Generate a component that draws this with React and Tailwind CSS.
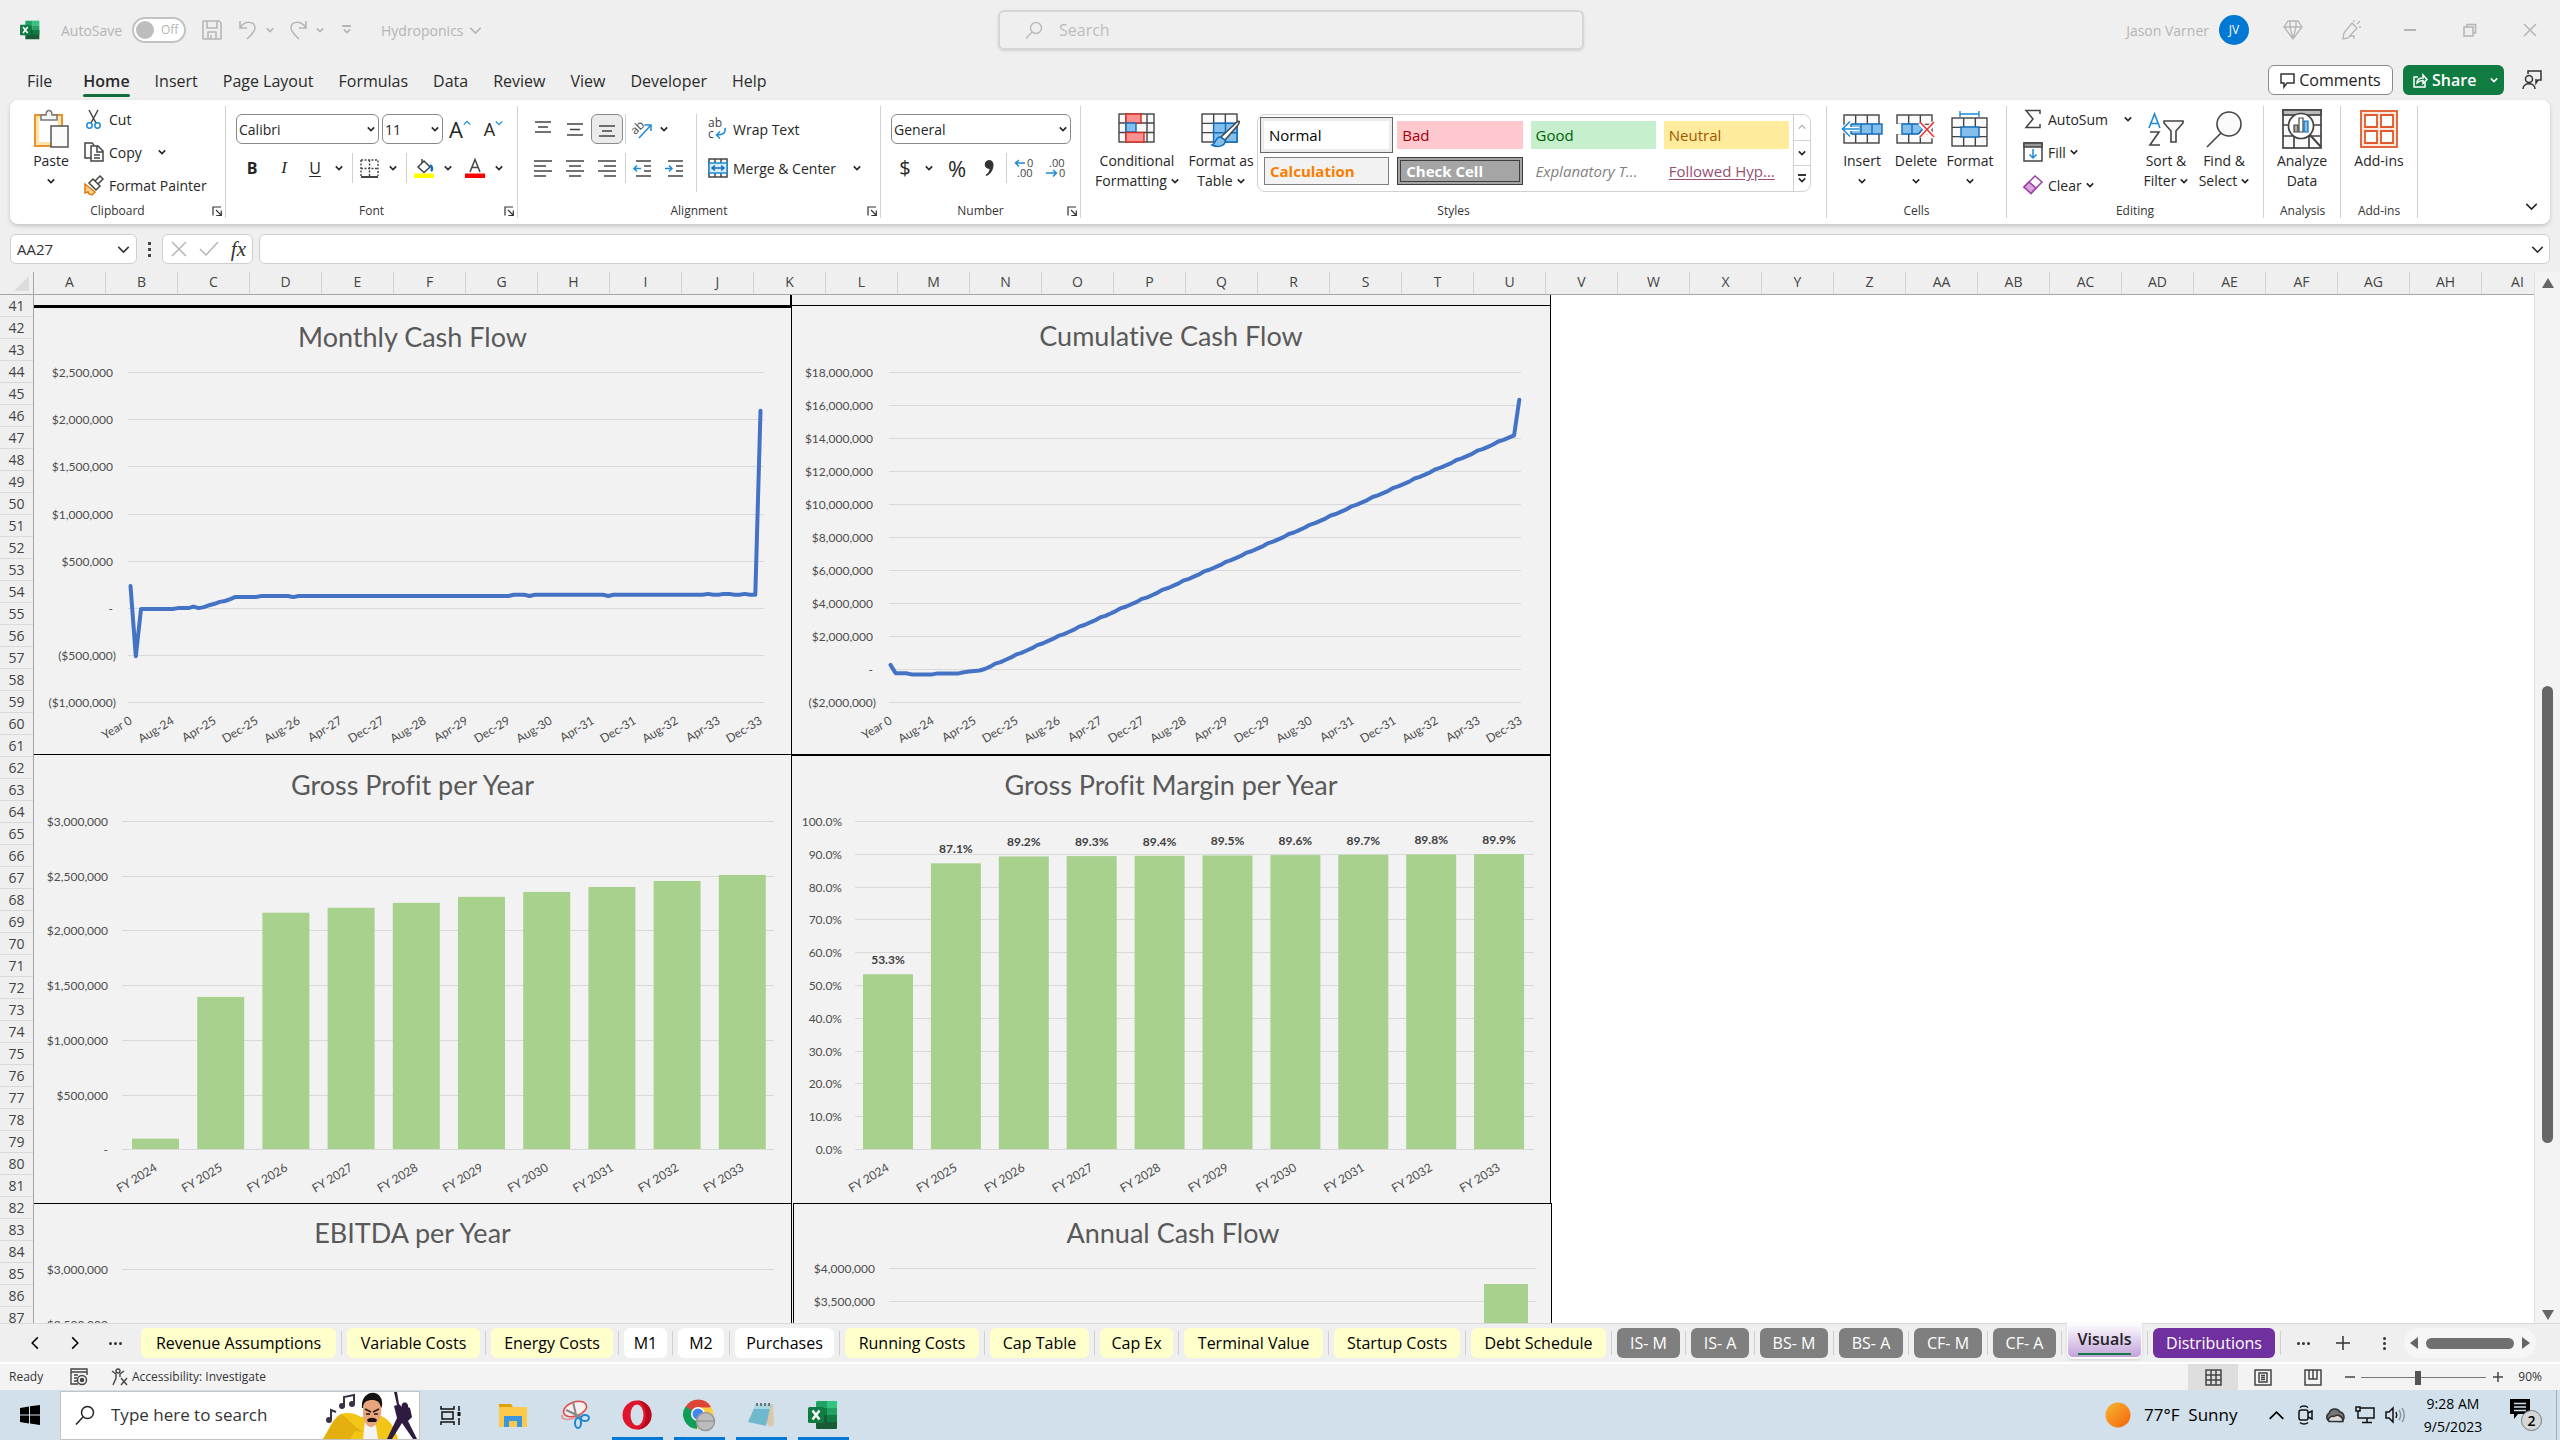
import React from "react";
import clsx from "clsx";

/* ---------- small shared pieces ---------- */

const Chev = ({ w = 8, className = "", sw = 2 }) => (
  <svg width={w} height={w} viewBox="0 0 10 10" fill="none" stroke="currentColor" strokeWidth={sw} className={clsx("shrink-0", className)}>
    <path d="M1 3l4 4 4-4" />
  </svg>
);

const Sep = ({ slot = "w-1", h = "h-[30px]" }) => (
  <div className={clsx("flex shrink-0 justify-center", slot)}>
    <div className={clsx("w-px bg-[#d1d1d1]", h)} />
  </div>
);

const Slot = ({ w, label, children, className = "" }) => (
  <button aria-label={label} className={clsx("flex h-[30px] shrink-0 items-center justify-center", w, className)}>
    {children}
  </button>
);

const Svg = ({ w = 20, h, box, children, ...rest }) => (
  <svg width={w} height={h || w} viewBox={box || `0 0 ${w} ${h || w}`} fill="none" stroke="#444" strokeWidth="1.5" className="shrink-0 overflow-visible" {...rest}>
    {children}
  </svg>
);

const Launcher = () => (
  <button aria-label="More options" className="flex items-center justify-center">
    <Svg w={10} stroke="#333" strokeWidth="1.2">
      <path d="M1 9.500V1h8M4 4l5 5M9.300 4.500v5h-5" />
    </Svg>
  </button>
);

function Group({ name, w, launcher, children, bodyClass = "" }) {
  return (
    <section aria-label={name} className={clsx("flex h-full shrink-0 pt-[3px]", w)}>
      <div className="flex min-w-0 flex-1 flex-col">
        <div className={clsx("flex h-[99px] shrink-0", bodyClass)}>{children}</div>
        <div className="grid h-[18px] shrink-0 grid-cols-[16px_1fr_16px] items-center text-center text-[12px] text-[#333]">
          <span />
          <span>{name}</span>
          {launcher ? <Launcher /> : <span />}
        </div>
      </div>
      <div className="mt-[3px] mb-[6px] w-px bg-[#d1d1d1]" />
    </section>
  );
}

const BigButton = ({ icon, lines, chevron, w, inline }) => (
  <button className={clsx("flex shrink-0 flex-col items-center pt-1", w)}>
    <span className="flex h-[44px] items-center justify-center">{icon}</span>
    {lines.map((l, i) => (
      <span key={l} className="flex h-5 items-center gap-1 whitespace-nowrap text-[14px] leading-5">
        {l}
        {inline && i === lines.length - 1 && <Chev />}
      </span>
    ))}
    {chevron && <span className="flex h-5 items-center"><Chev /></span>}
  </button>
);

/* ---------- icons ---------- */

const ExcelLogo = ({ size = 20 }) => (
  <svg width={size} height={size} viewBox="0 0 30 30" className="shrink-0">
    <path d="M9 1h10v7H8V2z" fill="#21a366" />
    <path d="M19 1h10v7H19z" fill="#33c481" />
    <path d="M8 8h11v7H8z" fill="#107c41" />
    <path d="M19 8h10v7H19z" fill="#21a366" />
    <path d="M8 15h21v13a1 1 0 01-1 1H9a1 1 0 01-1-1z" fill="#185c37" />
    <path d="M19 15h10v7H19z" fill="#107c41" />
    <rect x="0" y="7" width="16" height="16" rx="1.500" fill="#107c41" />
    <path d="M4.500 10.500l7 9M11.500 10.500l-7 9" stroke="#fff" strokeWidth="2.400" />
  </svg>
);

const PasteIcon = () => (
  <Svg w={36} h={38}>
    <rect x="2" y="5" width="27" height="31" fill="#fde3a7" stroke="#e8912d" strokeWidth="2" />
    <rect x="6" y="9" width="19" height="23" fill="#fff" stroke="none" />
    <path d="M8 10V5h5c0-6 6-6 6 0h5v5z" fill="#f5f5f5" stroke="#777" />
    <rect x="18" y="16" width="17" height="21" fill="#fafafa" stroke="#555" />
  </Svg>
);

const CutIcon = () => (
  <Svg w={20}>
    <path d="M5 1l7 13M14 1L7 14" />
    <circle cx="5.500" cy="16.500" r="2.700" stroke="#1e8ad6" />
    <circle cx="13.500" cy="16.500" r="2.700" stroke="#1e8ad6" />
  </Svg>
);

const CopyIcon = () => (
  <Svg w={20}>
    <path d="M8 16H1V1h7l2 2" />
    <path d="M7 4h7l5 5v10H7zM13 4v6h6M10 13h6M10 16h6" fill="#fff" />
  </Svg>
);

const PainterIcon = () => (
  <Svg w={20}>
    <path d="M1 9l10 8-3 3-3-1-1-2-3 1z" fill="#fbd28b" stroke="#e07a10" />
    <path d="M5 8l4-4 7 7-4 4zM11 6l5-5 3 3-5 5" fill="#fff" />
  </Svg>
);

const Grid = ({ x, y, w, h }) => (
  <g>
    <rect x={x} y={y} width={w} height={h} fill="#fafafa" />
    <path d={`M${x + w / 3} ${y}v${h}M${x + (2 * w) / 3} ${y}v${h}M${x} ${y + h / 3}h${w}M${x} ${y + (2 * h) / 3}h${w}`} />
  </g>
);

const CondIcon = () => (
  <Svg w={38} h={32} strokeWidth="1.400">
    <rect x="1" y="1" width="35" height="28" fill="#fafafa" />
    <path d="M8 1v28M29 1v28M1 10h35M1 19.500h35" />
    <rect x="8" y="1" width="15" height="9" fill="#ff9191" stroke="#d92c20" />
    <rect x="8" y="10" width="10" height="9" fill="#83beec" stroke="#0f6cbd" />
    <rect x="8" y="19.500" width="18" height="9.500" fill="#ff9191" stroke="#d92c20" />
  </Svg>
);

const TableIcon = () => (
  <Svg w={40} h={32} strokeWidth="1.400">
    <Grid x={1} y={1} w={35} h={28} />
    <path d="M12.600 10.300H36V29H12.600z" fill="#83beec" stroke="#0f6cbd" />
    <path d="M24.500 10v19M12.600 19.700H36" stroke="#0f6cbd" />
    <path d="M36 9c3-2 3 0 1 3L24 27l-4-3z" fill="#fff" stroke="#444" />
    <path d="M19 24c-5 0-3 6-8 8 6 3 14 1 13-5z" fill="#83beec" stroke="#0f6cbd" />
  </Svg>
);

const InsertIcon = () => (
  <Svg w={42} h={30} strokeWidth="1.400">
    <Grid x={3} y={1} w={35} h={28} />
    <rect x="10" y="10" width="31" height="10" fill="#83beec" stroke="#0f6cbd" />
    <path d="M20 10v10M31 10v10" stroke="#0f6cbd" />
    <path d="M2 15h16M10 7l-8.500 8 8.500 8" stroke="#fff" strokeWidth="4" />
    <path d="M1.500 15H18M9 7.500L1.500 15 9 22.500" stroke="#1e8ad6" strokeWidth="1.600" />
  </Svg>
);

const DeleteIcon = () => (
  <Svg w={40} h={30} strokeWidth="1.400">
    <Grid x={1} y={1} w={35} h={28} />
    <path d="M0 10h6v10H0z" fill="#fff" stroke="none" />
    <path d="M6 10h16l5 5-5 5H6zM16 10v10" fill="#83beec" stroke="#0f6cbd" />
    <path d="M24 9l14 14M38 9L24 23" stroke="#fff" strokeWidth="5" />
    <path d="M24 8l14 15M38 8L24 23" stroke="#e8383d" strokeWidth="1.700" />
  </Svg>
);

const FormatIcon = () => (
  <Svg w={38} h={36} strokeWidth="1.400">
    <Grid x={1} y={7} w={35} h={28} />
    <rect x="10" y="16" width="18" height="10" fill="#83beec" stroke="#0f6cbd" />
    <path d="M9 3h19M9 0v6M28 0v6" stroke="#1e8ad6" />
  </Svg>
);

const SortIcon = () => (
  <Svg w={38} h={36} strokeWidth="1.600">
    <path d="M2 17L7.500 3 13 17M4 12.500h7" stroke="#1e8ad6" />
    <path d="M3 21h9L3 34h10" />
    <path d="M17 10h19v2l-7 8v11h-5V20l-7-8z" fill="#fafafa" />
  </Svg>
);

const FindIcon = () => (
  <Svg w={38} h={38} strokeWidth="1.600">
    <circle cx="24" cy="14" r="12" fill="#fafafa" />
    <path d="M16 23L2 37" />
  </Svg>
);

const AnalyzeIcon = () => (
  <Svg w={40} h={40} strokeWidth="1.700">
    <rect x="1" y="1" width="38" height="38" fill="#fafafa" />
    <rect x="1" y="1" width="38" height="5" fill="#bbb" />
    <path d="M1 16h38M1 27h38M12 6v33M27 27v12" />
    <circle cx="19" cy="17" r="12.500" fill="#fff" />
    <path d="M28 26l11 12" strokeWidth="2" />
    <path d="M12 16h4v7h-4z" fill="#aaa" strokeWidth="1.200" />
    <path d="M17 9h4v14h-4z" fill="#fff" strokeWidth="1.200" />
    <path d="M22 12h4v11h-4z" fill="#83beec" stroke="#0f6cbd" strokeWidth="1.200" />
  </Svg>
);

const AddInsIcon = () => (
  <Svg w={38} h={38} stroke="#e0592a" strokeWidth="1.800">
    <rect x="1" y="1" width="36" height="36" fill="#fde9e0" />
    <path d="M5 5h12v12H5zM21 5h12v12H21zM5 21h12v12H5zM21 21h12v12H21z" fill="#fff" />
  </Svg>
);

const AlignIcon = ({ lines }) => (
  <Svg w={18} h={18} stroke="#444" strokeWidth="1.500">
    <path d={lines} />
  </Svg>
);

/* ---------- title bar, tabs ---------- */

function TitleBar() {
  return (
    <header className="grid h-[60px] shrink-0 grid-cols-[998fr_586fr_976fr] items-center text-[#b5b5b5]">
      <div className="flex items-center pl-5 text-[14px]">
        <ExcelLogo size={20} />
        <label htmlFor="autosave" className="ml-[21px] w-[63px]">AutoSave</label>
        <span className="ml-2 flex h-[26px] w-[54px] items-center gap-[7px] rounded-full border-2 border-[#c2c2c2] bg-white pl-[2px]">
          <input id="autosave" type="checkbox" className="size-[18px] appearance-none rounded-full bg-[#bdbdbd]" />
          <span className="text-[12px]">Off</span>
        </span>
        <button aria-label="Save" className="ml-4">
          <Svg w={20} stroke="#b5b5b5"><path d="M1 1h16l2 2v16H1zM5 1v7h10V1M6 19v-7h8v7M9 15v4" /></Svg>
        </button>
        <button aria-label="Undo" className="ml-4">
          <Svg w={20} stroke="#b5b5b5"><path d="M2 1v7h7M2 8C7 0 17 1 17 8c0 4-4 7-8 11" /></Svg>
        </button>
        <Chev className="ml-2" w={8} />
        <button aria-label="Redo" className="ml-[14px]">
          <Svg w={20} stroke="#b5b5b5"><path d="M18 1v7h-7M18 8C13 0 3 1 3 8c0 4 4 7 8 11" /></Svg>
        </button>
        <Chev className="ml-2" w={8} />
        <button aria-label="Customize toolbar" className="ml-[18px] flex flex-col items-center">
          <span className="h-[2px] w-[9px] bg-[#b5b5b5]" />
          <Chev w={8} />
        </button>
        <button className="ml-[30px] flex items-center gap-[5px]">Hydroponics <Chev w={13} sw={1.2} /></button>
      </div>
      <label className="flex h-[40px] items-center rounded-md border-2 border-[#d6d6d6] pl-[25px] text-[#bdbdbd] shadow-sm">
        <Svg w={18} stroke="#bdbdbd"><circle cx="11" cy="7" r="5.500" /><path d="M7 11l-6 6.500" /></Svg>
        <input aria-label="Search" placeholder="Search" className="ml-4 flex-1 bg-transparent text-[16px] outline-none placeholder:text-[#bdbdbd]" />
      </label>
      <div className="flex items-center justify-end text-[14px]">
        <span>Jason Varner</span>
        <span className="ml-[10px] flex size-[30px] items-center justify-center rounded-full bg-[#0078d4] text-[12px] text-white">JV</span>
        <button aria-label="Premium" className="ml-[15px] flex w-[58px] justify-center">
          <Svg w={20} stroke="#b5b5b5" strokeWidth="1.300"><path d="M5 1h10l4 6-9 12L1 7zM1 7h18M7 1v6l3 12 3-12V1" /></Svg>
        </button>
        <button aria-label="What's new" className="flex w-[58px] justify-center">
          <Svg w={20} stroke="#b5b5b5" strokeWidth="1.300"><path d="M11 3l5 5-9 10-5 1 1-6zM9 16h4v3M13 2V0M16 4l3-3M18 7h2" /></Svg>
        </button>
        <button aria-label="Minimize" className="flex w-[60px] justify-center"><span className="h-[2px] w-3 bg-[#b5b5b5]" /></button>
        <button aria-label="Restore" className="flex w-[60px] justify-center">
          <Svg w={14} stroke="#b5b5b5"><path d="M1 4h9v9H1zM4 4V1.500h8.500V10H10" /></Svg>
        </button>
        <button aria-label="Close" className="flex w-[60px] justify-center">
          <Svg w={14} stroke="#b5b5b5"><path d="M1 1l12 12M13 1L1 13" /></Svg>
        </button>
      </div>
    </header>
  );
}

const MENU = ["File", "Home", "Insert", "Page Layout", "Formulas", "Data", "Review", "View", "Developer", "Help"];

function MenuBar() {
  return (
    <nav className="flex h-10 shrink-0 items-start justify-between pl-[27px] pr-[18px]">
      <div className="flex gap-[25px] text-[16px] text-[#2b2b2b]">
        {MENU.map((m) => (
          <button key={m} className={clsx("flex h-[37px] flex-col items-stretch justify-between pt-2 leading-[26px]", m === "File" && "mr-[6px]", m === "Home" && "font-semibold")}>
            {m}
            {m === "Home" && <span className="h-[3px] rounded-full bg-[#0f703b]" />}
          </button>
        ))}
      </div>
      <div className="flex items-center pt-[5px] text-[16px]">
        <button className="flex h-[30px] w-[125px] items-center justify-center gap-1 rounded-md border border-[#8a8a8a] bg-white text-[#222]">
          <Svg w={15} stroke="#333"><path d="M1 1h13v9H7l-3 4v-4H1z" /></Svg>
          Comments
        </button>
        <button className="ml-[10px] flex h-[30px] w-[101px] items-center rounded-md bg-[#107c41] pl-[10px] text-white">
          <Svg w={15} stroke="#fff"><path d="M5 4H1v10h11V9M4 10c0-4 3-5 6-5V2l4 4.500-4 4V7.500C8 7.500 6 8 4 10z" /></Svg>
          <span className="ml-1 font-semibold">Share</span>
          <Chev className="ml-auto mr-[6px]" w={8} />
        </button>
        <button aria-label="Presence" className="ml-[18px]">
          <Svg w={20} stroke="#333"><path d="M6 4V1h13v9h-3l-2 3V9" /><circle cx="7" cy="9" r="3.500" /><path d="M1 19c0-7 12-7 12 0" /></Svg>
        </button>
      </div>
    </nav>
  );
}

/* ---------- ribbon ---------- */

const ComboBox = ({ label, value, w }) => (
  <label className={clsx("flex h-[30px] items-center rounded-md border border-[#8a8a8a] bg-white pr-[3px]", w)}>
    <select aria-label={label} className="min-w-0 flex-1 appearance-none bg-transparent pl-[2px] text-[14px] outline-none">
      <option>{value}</option>
    </select>
    <Chev w={8} />
  </label>
);

const STYLE_CELLS = [
  ["Normal", "bg-white text-black outline outline-[3px] outline-[#ececec] ring-[4px] ring-[#666]"],
  ["Bad", "bg-[#ffc7ce] text-[#9c0006]"],
  ["Good", "bg-[#c6efce] text-[#006100]"],
  ["Neutral", "bg-[#ffeb9c] text-[#9c5700]"],
  ["Calculation", "border border-[#7f7f7f] bg-[#f2f2f2] font-bold text-[#fa7d00]"],
  ["Check Cell", "border-4 border-double border-[#3f3f3f] bg-[#a5a5a5] font-bold text-white"],
  ["Explanatory T...", "italic text-[#7f7f7f]"],
  ["Followed Hyp...", "text-[#954f72] underline underline-offset-2"],
];

const CommandRow = ({ icon, text, chev, chevGap = "ml-1" }) => (
  <button className="flex h-8 items-center text-left text-[14px]">
    <span className="flex w-5 justify-center">{icon}</span>
    <span className="ml-[5px]">{text}</span>
    {chev && <Chev className={chevGap} />}
  </button>
);

function Ribbon() {
  return (
    <div className="mx-[10px] flex h-[124px] shrink-0 rounded-lg bg-white text-[#262626] shadow-[0_2px_4px_rgba(0,0,0,0.18)]">
      <Group name="Clipboard" w="w-[216px]" launcher bodyClass="pl-4">
        <BigButton w="w-[50px]" icon={<PasteIcon />} lines={["Paste"]} chevron />
        <div className="ml-2 flex flex-col gap-px">
          <CommandRow icon={<CutIcon />} text="Cut" />
          <CommandRow icon={<CopyIcon />} text="Copy" chev chevGap="ml-4" />
          <CommandRow icon={<PainterIcon />} text="Format Painter" />
        </div>
      </Group>

      <Group name="Font" w="w-[292px]" launcher bodyClass="flex-col gap-[9px] pt-[11px] pl-[10px]">
        <div className="flex">
          <ComboBox label="Font" value="Calibri" w="w-[143px] mr-[3px]" />
          <ComboBox label="Font size" value="11" w="w-[61px]" />
          <Slot w="w-[34px]" label="Increase font size" className="text-[22px]">A<Chev w={8} sw={1.6} className="mb-3 rotate-180 text-[#1e8ad6]" /></Slot>
          <Slot w="w-[33px]" label="Decrease font size" className="text-[18px]">A<Chev w={8} sw={1.6} className="mb-3 text-[#1e8ad6]" /></Slot>
        </div>
        <div className="flex items-center">
          <Slot w="w-8" label="Bold" className="text-[16px] font-bold">B</Slot>
          <Slot w="w-8" label="Italic" className="font-['Liberation_Serif',serif] text-[17px] italic">I</Slot>
          <Slot w="w-[30px]" label="Underline" className="text-[16px] underline underline-offset-2">U</Slot>
          <Slot w="w-[18px]" label="Underline options"><Chev /></Slot>
          <Sep slot="w-2" />
          <Slot w="w-[27px]" label="Borders"><Svg w={19} strokeWidth="1.400"><path d="M1 18h17" strokeWidth="2" /><path d="M1 1h17v16M1 1v16M9.500 1v16M1 9.500h17" strokeDasharray="2 1.500" /></Svg></Slot>
          <Slot w="w-5" label="Border options"><Chev /></Slot>
          <Sep slot="w-[6px]" />
          <Slot w="w-[30px]" label="Fill color"><Svg w={20}><path d="M4 9l6-6 6 6-6 5.500zM8 5V1" /><path d="M16 7c3 2 2 5 1 6" stroke="#0f6cbd" strokeWidth="2.500" /><path d="M0 15.500h20v4.500H0z" fill="#ffff00" stroke="none" /></Svg></Slot>
          <Slot w="w-[18px]" label="Fill options"><Chev /></Slot>
          <Slot w="w-9" label="Font color" className="flex-col"><Svg w={20}><path d="M5 14L10 1.500 15 14M6.800 9.500h6.400" /><path d="M0 15.500h20v4.500H0z" fill="#ff0000" stroke="none" /></Svg></Slot>
          <Slot w="w-3" label="Font color options"><Chev /></Slot>
        </div>
      </Group>

      <Group name="Alignment" w="w-[363px]" launcher bodyClass="pt-[11px] pl-[9px]">
        <div className="flex w-[163px] flex-col gap-[9px]">
          <div className="flex items-center">
            <Slot w="w-8" label="Top align"><AlignIcon lines="M1 2h16M4 7h10M1 12h16" /></Slot>
            <Slot w="w-8" label="Middle align"><AlignIcon lines="M1 4h16M4 9.500h10M1 15h16" /></Slot>
            <Slot w="w-8" label="Bottom align" className="rounded-md border border-[#8a8a8a] bg-[#ebebeb]"><AlignIcon lines="M1 6h16M4 11h10M1 16h16" /></Slot>
            <Sep slot="w-1" />
            <Slot w="w-[30px]" label="Orientation"><Svg w={22}><text x="0" y="15" fontSize="12" fill="#444" stroke="none" transform="rotate(-45 5 11)">ab</text><path d="M8 20L20 7M13.500 7H20v6" stroke="#1e8ad6" /></Svg></Slot>
            <Slot w="w-[14px]" label="Orientation options"><Chev /></Slot>
          </div>
          <div className="flex items-center">
            <Slot w="w-8" label="Align left"><AlignIcon lines="M0 2h18M0 7h12M0 12h18M0 17h12" /></Slot>
            <Slot w="w-8" label="Center"><AlignIcon lines="M0 2h18M3 7h12M0 12h18M3 17h12" /></Slot>
            <Slot w="w-8" label="Align right"><AlignIcon lines="M0 2h18M6 7h12M0 12h18M6 17h12" /></Slot>
            <Sep slot="w-1" />
            <Slot w="w-[30px]" label="Decrease indent"><Svg w={18}><path d="M3 2h15M11 7h7M11 12h7M3 17h15" /><path d="M8 9.500H1M4 6.500l-3 3 3 3" stroke="#1e8ad6" /></Svg></Slot>
            <Slot w="w-[33px]" label="Increase indent"><Svg w={18}><path d="M3 2h15M11 7h7M11 12h7M3 17h15" /><path d="M0 9.500h7M4 6.500l3 3-3 3" stroke="#1e8ad6" /></Svg></Slot>
          </div>
        </div>
        <Sep slot="w-3" h="h-[78px]" />
        <div className="ml-[6px] flex flex-col gap-[9px] text-[14px]">
          <button className="flex h-[30px] items-center gap-[5px]">
            <Svg w={20}><text x="0" y="8" fontSize="12" fill="#444" stroke="none">ab</text><text x="0" y="19" fontSize="12" fill="#444" stroke="none">c</text><path d="M17 9c1 5-2 7-8 7M12 12.500L8.500 16l3.500 3.500" stroke="#1e8ad6" /></Svg>
            Wrap Text
          </button>
          <button className="flex h-[30px] items-center gap-[5px]">
            <Svg w={20}><path d="M1 1h18v18H1zM7 1v4M13 1v4M7 15v4M13 15v4" /><path d="M1 5h18v10H1z" fill="#d9ecfa" stroke="#1e8ad6" /><path d="M4 10h12M7 7.500L4 10l3 2.500M13 7.500l3 2.500-3 2.500" stroke="#0f6cbd" /></Svg>
            Merge &amp; Center
            <Chev className="ml-3" />
          </button>
        </div>
      </Group>

      <Group name="Number" w="w-[200px]" launcher bodyClass="flex-col gap-[9px] pt-[11px] pl-[10px]">
        <ComboBox label="Number format" value="General" w="w-[180px]" />
        <div className="flex items-center">
          <Slot w="w-7" label="Currency" className="text-[20px]">$</Slot>
          <Slot w="w-5" label="Currency options"><Chev /></Slot>
          <Slot w="w-9" label="Percent" className="text-[22px]">%</Slot>
          <Slot w="w-[28px]" label="Comma"><Svg w={10} h={16} stroke="none"><path d="M5 0a4.500 4.500 0 014.500 5c0 5-3 9-7 11l-1-1c3-2 4-4 4-6A4.500 4.500 0 015 0z" fill="#333" /></Svg></Slot>
          <Sep slot="w-[6px]" />
          <Slot w="w-[30px]" label="Increase decimal"><Svg w={20}><text x="13" y="9" fontSize="11" fill="#444" stroke="none">0</text><text x="3" y="19" fontSize="11" fill="#444" stroke="none">.00</text><path d="M11 5H1M5 2L1.500 5 5 8.500" stroke="#1e8ad6" /></Svg></Slot>
          <Slot w="w-[34px]" label="Decrease decimal"><Svg w={20}><text x="3" y="9" fontSize="11" fill="#444" stroke="none">.00</text><text x="13" y="19" fontSize="11" fill="#444" stroke="none">0</text><path d="M0 15h10M7 12l3.500 3L7 18.500" stroke="#1e8ad6" /></Svg></Slot>
        </div>
      </Group>

      <Group name="Styles" w="w-[746px]" bodyClass="pl-2">
        <BigButton w="w-24" icon={<CondIcon />} lines={["Conditional", "Formatting"]} inline />
        <BigButton w="w-[72px]" icon={<TableIcon />} lines={["Format as", "Table"]} inline />
        <div className="mt-[11px] flex h-[78px] w-[554px] rounded-lg border border-[#d1d1d1]">
          <div className="grid flex-1 grid-cols-4 gap-2 py-[6px] pr-[4px] pl-[6px]">
            {STYLE_CELLS.map(([name, cls]) => (
              <button key={name} className={clsx("flex h-7 items-center whitespace-nowrap px-[5px] text-[15px]", cls)}>{name}</button>
            ))}
          </div>
          <div className="flex w-[17px] flex-col divide-y divide-[#d1d1d1] border-l border-[#d1d1d1]">
            <button aria-label="Scroll styles up" className="flex flex-1 items-center justify-center text-[#aaa]"><Chev className="rotate-180" sw={1.5} /></button>
            <button aria-label="Scroll styles down" className="flex flex-1 items-center justify-center"><Chev /></button>
            <button aria-label="More styles" className="flex flex-1 flex-col items-center justify-center"><span className="h-[2px] w-2 bg-[#333]" /><Chev /></button>
          </div>
        </div>
      </Group>

      <Group name="Cells" w="w-[180px]" bodyClass="pl-2">
        <BigButton w="w-[54px]" icon={<InsertIcon />} lines={["Insert"]} chevron />
        <BigButton w="w-[54px]" icon={<DeleteIcon />} lines={["Delete"]} chevron />
        <BigButton w="w-[54px]" icon={<FormatIcon />} lines={["Format"]} chevron />
      </Group>

      <Group name="Editing" w="w-[257px]" bodyClass="pl-4">
        <div className="flex w-[114px] flex-col gap-px">
          <CommandRow icon={<Svg w={18} h={20}><path d="M16 5V1.500H2L9 10l-7 8.500h14V15" /></Svg>} text="AutoSum" chev chevGap="ml-4" />
          <CommandRow icon={<Svg w={20}><path d="M1 1h18v18H1z" /><path d="M1 1h18v4H1z" fill="#999" /><path d="M10 7v9M6.500 12.500L10 16l3.500-3.500" stroke="#1e8ad6" /></Svg>} text="Fill" chev />
          <CommandRow icon={<Svg w={20}><path d="M1 12L12 1l7 6L8 18.500z" stroke="#9b3fa5" /><path d="M1 12l5-5 7 6-5 5.500z" fill="#d9a3de" stroke="#9b3fa5" /></Svg>} text="Clear" chev />
        </div>
        <BigButton w="w-[58px]" icon={<SortIcon />} lines={["Sort &", "Filter"]} inline />
        <BigButton w="w-[58px]" icon={<FindIcon />} lines={["Find &", "Select"]} inline />
      </Group>

      <Group name="Analysis" w="w-[77px]" bodyClass="justify-center">
        <BigButton w="w-full" icon={<AnalyzeIcon />} lines={["Analyze", "Data"]} />
      </Group>
      <Group name="Add-ins" w="w-[77px]" bodyClass="justify-center">
        <BigButton w="w-full" icon={<AddInsIcon />} lines={["Add-ins"]} />
      </Group>
      <button aria-label="Collapse ribbon" className="ml-auto self-end pr-3 pb-[11px]"><Chev w={13} sw={1.2} /></button>
    </div>
  );
}

function FormulaBar() {
  return (
    <div className="mx-[10px] mt-[10px] mb-2 flex h-[30px] shrink-0 items-center text-[#333]">
      <label className="flex h-full w-[127px] items-center rounded-md border border-[#cfcfcf] bg-white px-[6px]">
        <input aria-label="Name box" defaultValue="AA27" className="w-0 flex-1 text-[15px] outline-none" />
        <Chev w={13} sw={1.2} />
      </label>
      <span className="flex w-[25px] flex-col items-center gap-[3px]">
        {[0, 1, 2].map((i) => <i key={i} className="size-[3px] bg-[#444]" />)}
      </span>
      <div className="flex h-full w-[91px] items-center justify-around rounded-md border border-[#cfcfcf] bg-white pl-[2px]">
        <button aria-label="Cancel"><Svg w={16} stroke="#b5b5b5"><path d="M1 1l14 14M15 1L1 15" /></Svg></button>
        <button aria-label="Enter"><Svg w={20} h={16} stroke="#b5b5b5"><path d="M1 8l6 6L19 1" /></Svg></button>
        <button aria-label="Insert function" className="font-['Liberation_Serif',serif] text-[21px] leading-6 italic">fx</button>
      </div>
      <label className="ml-[6px] flex h-full flex-1 items-center rounded-md border border-[#cfcfcf] bg-white pr-[5px]">
        <input aria-label="Formula" className="flex-1 px-2 outline-none" />
        <Chev w={13} sw={1.2} />
      </label>
    </div>
  );
}

/* ---------- charts ---------- */

const INK = "#595959";
const FONT = "Lato, 'Open Sans', sans-serif";

function ChartFrame({ title, titleY = 42, w, h = 449, plot, ticks, labelX, tickStep, children, cats, catX, catY }) {
  return (
    <svg viewBox={`0 0 ${w} ${h}`} width={w} height={h} role="img" aria-label={title} fontFamily={FONT} className="block [font-variant-ligatures:none]">
      <text x={w / 2} y={titleY} textAnchor="middle" fontSize="27" fill={INK}>{title}</text>
      {ticks.map((t, i) => {
        const y = plot.top + i * tickStep;
        return (
          <g key={t + i}>
            <path d={`M${plot.left} ${Math.round(y) + 0.5}H${plot.right}`} stroke="#d9d9d9" />
            <text x={labelX + (t.endsWith(")") ? 3 : 0)} y={y + 5} textAnchor="end" fontSize="12" fill="#4d4d4d">{t}</text>
          </g>
        );
      })}
      {children}
      {(cats || []).map((c, i) => {
        const x = catX(i);
        return <text key={c} x={x} y={catY} textAnchor="end" fontSize="12" fill="#4d4d4d" transform={`rotate(-31 ${x} ${catY})`}>{c}</text>;
      })}
    </svg>
  );
}

const MONTHS = ["Year 0", "Aug-24", "Apr-25", "Dec-25", "Aug-26", "Apr-27", "Dec-27", "Aug-28", "Apr-29", "Dec-29", "Aug-30", "Apr-31", "Dec-31", "Aug-32", "Apr-33", "Dec-33"];
const YEARS = Array.from({ length: 10 }, (_, i) => `FY ${2024 + i}`);

const MONTHLY = Array.from({ length: 121 }, (_, i) => {
  const ramp = [245, -500, 0, 0, 0, 0, 0, 0, 0, 10, 10, 10, 25, 10, 20, 40, 55, 75, 85, 105, 128, 128, 128, 128, 128];
  if (i < ramp.length) return ramp[i];
  if (i === 120) return 2100;
  if (i === 31) return 126;
  if (i === 76 || i === 91) return 138;
  if (i === 110 || i === 113 || i === 114 || i === 117) return 160;
  return i < 73 ? 138 : 150;
});

const CUMULATIVE = Array.from({ length: 121 }, (_, i) => {
  if (i === 0) return 250;
  if (i === 120) return 16350;
  if (i < 4) return -260;
  if (i < 9) return -330;
  if (i < 14) return -270;
  if (i < 18) return -230 + (i - 13) * 35;
  return (i - 18) * 140.500 + (i % 4 === 0 ? 45 : 0);
});

const GROSS = [0.095, 1.390, 2.160, 2.205, 2.250, 2.305, 2.350, 2.395, 2.450, 2.505];
const MARGIN = [53.3, 87.1, 89.2, 89.3, 89.4, 89.5, 89.6, 89.7, 89.8, 89.9];

const line = (data, x0, dx, zero, perUnit) => data.map((v, i) => `${(x0 + i * dx).toFixed(1)},${(zero - v * perUnit).toFixed(1)}`).join(" ");

const MonthlyChart = () => (
  <ChartFrame title="Monthly Cash Flow" w={757} plot={{ left: 94, right: 730, top: 67 }} tickStep={47.2} labelX={79}
    ticks={["$2,500,000", "$2,000,000", "$1,500,000", "$1,000,000", "$500,000", "-", "($500,000)", "($1,000,000)"]}
    cats={MONTHS} catX={(i) => 99 + i * 42} catY={418}>
    <polyline points={line(MONTHLY, 96.500, 5.25, 304, 0.0944)} fill="none" stroke="#4472c4" strokeWidth="4" strokeLinejoin="round" strokeLinecap="round" />
  </ChartFrame>
);

const CumulativeChart = () => (
  <ChartFrame title="Cumulative Cash Flow" titleY={41} w={758} plot={{ left: 97, right: 729, top: 67 }} tickStep={32.95} labelX={81}
    ticks={["$18,000,000", "$16,000,000", "$14,000,000", "$12,000,000", "$10,000,000", "$8,000,000", "$6,000,000", "$4,000,000", "$2,000,000", "-", "($2,000,000)"]}
    cats={MONTHS} catX={(i) => 101 + i * 42} catY={418}>
    <polyline points={line(CUMULATIVE, 98.500, 5.24, 364, 0.01647)} fill="none" stroke="#4472c4" strokeWidth="4" strokeLinejoin="round" strokeLinecap="round" />
  </ChartFrame>
);

const GrossChart = () => (
  <ChartFrame title="Gross Profit per Year" titleY={41} w={757} plot={{ left: 88, right: 740, top: 67 }} tickStep={54.7} labelX={74}
    ticks={["$3,000,000", "$2,500,000", "$2,000,000", "$1,500,000", "$1,000,000", "$500,000", "-"]}
    cats={YEARS} catX={(i) => 124 + i * 65.2} catY={416}>
    {GROSS.map((v, i) => <rect key={i} x={98 + i * 65.2} y={395 - v * 109.4} width="47" height={v * 109.4} fill="#a9d18e" />)}
  </ChartFrame>
);

const MarginChart = () => (
  <ChartFrame title="Gross Profit Margin per Year" titleY={41} w={758} plot={{ left: 63, right: 742, top: 67 }} tickStep={32.8} labelX={50}
    ticks={["100.0%", "90.0%", "80.0%", "70.0%", "60.0%", "50.0%", "40.0%", "30.0%", "20.0%", "10.0%", "0.0%"]}
    cats={YEARS} catX={(i) => 98 + i * 67.9} catY={416}>
    {MARGIN.map((v, i) => (
      <g key={i}>
        <rect x={71 + i * 67.9} y={395 - v * 3.28} width="50" height={v * 3.28} fill="#a9d18e" />
        <text x={96 + i * 67.9} y={395 - v * 3.28 - 10} textAnchor="middle" fontSize="12" fontWeight="700" fill="#404040">{v.toFixed(1)}%</text>
      </g>
    ))}
  </ChartFrame>
);

const EbitdaChart = () => (
  <ChartFrame title="EBITDA per Year" titleY={40} w={757} plot={{ left: 88, right: 740, top: 66 }} tickStep={54.7} labelX={74}
    ticks={["$3,000,000", "$2,500,000"]} h={130} />
);

const AnnualChart = () => (
  <ChartFrame title="Annual Cash Flow" titleY={40} w={758} plot={{ left: 95, right: 742, top: 65 }} tickStep={33} labelX={81}
    ticks={["$4,000,000", "$3,500,000"]} h={130}>
    <rect x="690" y="81" width="44" height="60" fill="#a9d18e" />
  </ChartFrame>
);

/* ---------- worksheet ---------- */

const COLS = Array.from({ length: 35 }, (_, i) => (i < 26 ? String.fromCharCode(65 + i) : "A" + String.fromCharCode(65 + i - 26)));
const ROWS = Array.from({ length: 47 }, (_, i) => 41 + i);

function Worksheet() {
  return (
    <main className="flex min-h-0 flex-1">
      <div className="flex min-w-0 flex-1 flex-col">
        <div className="flex h-[23px] shrink-0 overflow-hidden border-b border-[#a6a6a6] text-[14px] leading-5 text-[#444]">
          <div className="flex w-[34px] shrink-0 items-end justify-end border-r border-[#a6a6a6] pr-1 pb-[3px]">
            <svg width="15" height="15"><path d="M15 0v15H0z" fill="#dcdcdc" /></svg>
          </div>
          {COLS.map((c) => (
            <div key={c} className="flex w-[72px] shrink-0 items-start justify-center border-r border-[#d4d4d4]">{c}</div>
          ))}
        </div>
        <div className="flex min-h-0 flex-1 overflow-hidden bg-white">
          <div className="w-[34px] shrink-0 border-r border-[#a6a6a6] bg-[#efefef] text-[14px] text-[#444]">
            {ROWS.map((r) => (
              <div key={r} className="flex h-[22px] items-center justify-center border-b border-[#d9d9d9]">{r}</div>
            ))}
          </div>
          <div className="grid shrink-0 auto-rows-max grid-cols-[758px_759px] bg-[#f2f2f2]">
            <div className="h-[10px] border-r-2 border-black" />
            <div className="h-[10px] border-r border-black" />
            <div className="h-[449px] overflow-hidden border-t-[3px] border-r border-black"><div className="-mt-[3px]"><MonthlyChart /></div></div>
            <div className="h-[449px] overflow-hidden border-t border-r border-black"><div className="-mt-px"><CumulativeChart /></div></div>
            <div className="h-[449px] overflow-hidden border-t border-r border-black"><div className="-mt-px"><GrossChart /></div></div>
            <div className="h-[449px] overflow-hidden border-t-2 border-r border-black"><div className="-mt-[2px]"><MarginChart /></div></div>
            <div className="h-[130px] overflow-hidden border-t border-r border-black"><div className="-mt-px"><EbitdaChart /></div></div>
            <div className="ml-px h-[130px] w-[759px] overflow-hidden border-t border-r border-l border-black bg-[#f2f2f2]"><div className="-mt-px"><AnnualChart /></div></div>
          </div>
        </div>
      </div>
      <div className="flex w-[26px] shrink-0 flex-col items-center border-l border-[#e0e0e0] bg-[#f3f3f3] pt-[6px] pb-[3px] text-[#666]">
        <svg width="12" height="10"><path d="M6 0l6 10H0z" fill="currentColor" /></svg>
        <div className="flex w-full flex-1 flex-col items-center">
          <div className="grow-[399]" />
          <div className="w-[11px] grow-[458] rounded-full bg-[#666]" />
          <div className="grow-[167]" />
        </div>
        <svg width="12" height="10"><path d="M0 0h12L6 10z" fill="currentColor" /></svg>
      </div>
    </main>
  );
}

/* ---------- sheet tabs ---------- */

const Y = "bg-[#ffffcc] text-black";
const W = "bg-white text-black";
const G = "bg-[#7f7f7f] text-white";
const SHEETS = [
  ["Revenue Assumptions", Y, "w-[195px]"], ["Variable Costs", Y, "w-[133px]"], ["Energy Costs", Y, "w-[122px]"],
  ["M1", W, "w-[43px]"], ["M2", W, "w-[46px]"], ["Purchases", W, "w-[99px]"],
  ["Running Costs", Y, "w-[134px]"], ["Cap Table", Y, "w-[99px]"], ["Cap Ex", Y, "w-[73px]"],
  ["Terminal Value", Y, "w-[139px]"], ["Startup Costs", Y, "w-[126px]"], ["Debt Schedule", Y, "w-[135px]"],
  ["IS- M", G, "w-[63px]"], ["IS- A", G, "w-[58px]"], ["BS- M", G, "w-[68px]"], ["BS- A", G, "w-[64px]"],
  ["CF- M", G, "w-[68px]"], ["CF- A", G, "w-[63px]"],
  ["Visuals", "active", "w-[75px]"], ["Distributions", "bg-[#7030a0] text-white", "w-[122px]"],
];

const Dots = ({ vertical }) => (
  <span className={clsx("flex gap-[2px]", vertical && "flex-col")}>
    {[0, 1, 2].map((i) => <i key={i} className="size-[3px] rounded-full bg-[#333]" />)}
  </span>
);

function SheetTabs() {
  return (
    <nav className="flex h-[41px] shrink-0 items-start border-t border-b-2 border-t-[#d9d9d9] border-b-white pl-[15px] text-[16px]">
      <button aria-label="Previous sheet" className="flex h-[38px] w-10 items-center justify-center"><Chev w={14} sw={1.1} className="rotate-90" /></button>
      <button aria-label="Next sheet" className="flex h-[38px] w-10 items-center justify-center"><Chev w={14} sw={1.1} className="-rotate-90" /></button>
      <button aria-label="All sheets" className="mr-[6px] flex h-[38px] w-10 items-center justify-center"><Dots /></button>
      {SHEETS.map(([name, cls, w]) => (
        <React.Fragment key={name}>
          {cls === "active" ? (
            <button className={clsx("-mt-px flex h-[36px] shrink-0 flex-col items-center rounded-b-md border-x border-b-2 border-[#fafafa] bg-linear-to-b from-white to-[#c3a3da] pt-[2px] font-semibold text-[#222] shadow-sm", w)}>
              <span className="border-b-2 border-[#107c41] leading-[28px]">{name}</span>
            </button>
          ) : (
            <button className={clsx("mt-1 h-[30px] shrink-0 rounded-md text-center leading-[31px] whitespace-nowrap", cls, w)}>{name}</button>
          )}
          <span className="mt-[7px] flex h-6 w-[11px] shrink-0 justify-center"><i className="w-px bg-[#cfcfcf]" /></span>
        </React.Fragment>
      ))}
      <button aria-label="More sheets" className="flex h-[38px] w-[34px] items-center justify-center"><Dots /></button>
      <button aria-label="New sheet" className="flex h-[38px] w-[46px] items-center justify-center"><Svg w={14} stroke="#333"><path d="M7 0v14M0 7h14" /></Svg></button>
      <span className="flex h-[38px] w-9 items-center justify-center"><Dots vertical /></span>
      <div className="mt-1 flex h-[30px] flex-1 items-center pl-[2px]">
        <div className="flex h-[30px] w-[132px] items-center justify-between rounded-full bg-[#f6f6f6] px-[6px] text-[#666]">
          <svg width="8" height="12"><path d="M8 0v12L0 6z" fill="currentColor" /></svg>
          <div className="h-[11px] w-[88px] rounded-full bg-[#707070]" />
          <svg width="8" height="12"><path d="M0 0l8 6-8 6z" fill="currentColor" /></svg>
        </div>
      </div>
    </nav>
  );
}

function StatusBar() {
  return (
    <div className="flex h-[26px] shrink-0 items-center bg-[#f3f3f3] pr-[18px] pl-[9px] text-[12px] text-[#333]">
      <span className="w-[61px]">Ready</span>
      <Svg w={18} strokeWidth="1.400"><path d="M8 16H1V1h16v6M1 4h16M4 7h4M4 10h3M4 13h3" /><circle cx="12" cy="12" r="4.500" /><circle cx="12" cy="12" r="1.500" fill="#444" /></Svg>
      <button className="ml-[22px] flex items-center gap-1">
        <Svg w={18} strokeWidth="1.400"><circle cx="8" cy="3" r="2" /><path d="M2 3l4 3v4l-3 7M14 3l-4 3v3M11 10l6 7M17 10l-6 7" /></Svg>
        Accessibility: Investigate
      </button>
      <div className="ml-auto flex h-full items-center">
        <button aria-label="Normal view" className="flex h-full w-[50px] items-center justify-center bg-[#dedede]"><Svg w={17} h={17}><path d="M1 1h15v15H1zM6 1v15M11 1v15M1 6h15M1 11h15" /></Svg></button>
        <button aria-label="Page layout view" className="flex h-full w-[50px] items-center justify-center"><Svg w={18} h={17}><path d="M1 1h16v15H1zM5 4h8v9H5zM7 6.500h4M7 8.500h4M7 10.500h4" /></Svg></button>
        <button aria-label="Page break view" className="flex h-full w-[50px] items-center justify-center"><Svg w={18} h={17}><path d="M1 1h16v15H1zM5 1v9h8V1M9 1v9" /></Svg></button>
        <button aria-label="Zoom out" className="flex w-[23px] justify-center"><Svg w={10}><path d="M0 5h10" /></Svg></button>
        <input type="range" aria-label="Zoom" defaultValue="45" className="h-5 w-[125px] appearance-none bg-transparent [&::-webkit-slider-runnable-track]:h-[1px] [&::-webkit-slider-runnable-track]:bg-[#777] [&::-webkit-slider-thumb]:-mt-[6px] [&::-webkit-slider-thumb]:h-[14px] [&::-webkit-slider-thumb]:w-[6px] [&::-webkit-slider-thumb]:appearance-none [&::-webkit-slider-thumb]:bg-[#555]" />
        <button aria-label="Zoom in" className="flex w-6 justify-center"><Svg w={10}><path d="M0 5h10M5 0v10" /></Svg></button>
        <span className="w-[32px] text-right">90%</span>
      </div>
    </div>
  );
}

/* ---------- taskbar ---------- */

const SearchArt = () => (
  <svg width="98" height="47" viewBox="0 0 98 47" className="shrink-0 self-end">
    <path d="M2 47C7 40 12 26 20 22c6-2 14-1 20 3l20-1c8 3 14 11 17 23z" fill="#f2c517" />
    <path d="M2 47C7 40 12 26 20 22c8 5 12 12 22 18l-8-1-5 8z" fill="#e3b010" />
    <path d="M44 28l10-1 3 20H42z" fill="#f4f4f6" />
    <path d="M42 8c0-3 20-3 19 0l-1 15c-2 7-6 12-10 12s-7-5-8-12z" fill="#e6a57d" />
    <path d="M41 16c-2-19 22-21 20-2l-1 2c-1-6-4-8-9-8s-9 2-9 8z" fill="#17120f" />
    <path d="M44 17l6 3M58 17l-6 3M45 22h4M53 22h4" stroke="#2b1710" strokeWidth="1.500" />
    <path d="M46 28c2-3 8-3 10 0l-1 2h-8z" fill="#1d1210" />
    <path d="M73 0l3 0 2 12 3 3c-2-6 7-6 6 0l2 1 2 9-4 4 9 18h-4l-11-16-10 16h-5l10-21-3-12 3-1z" fill="#2f1b3f" />
    <path d="M23 14V5l10-2v9M10 27V18l5 2" fill="none" stroke="#3a3244" strokeWidth="2" />
    <g fill="#3a3244"><circle cx="21" cy="14" r="3" /><circle cx="31" cy="12" r="3" /><circle cx="8" cy="28" r="3" /></g>
  </svg>
);

const TaskIcon = ({ label, open, children }) => (
  <button aria-label={label} className="flex h-full w-[62px] shrink-0 flex-col items-center">
    <span className="flex flex-1 items-center pt-[3px]">{children}</span>
    <span className={clsx("h-[3px] w-[51px]", open && "bg-[#0078d7]")} />
  </button>
);

function Taskbar() {
  return (
    <footer className="flex h-[50px] shrink-0 items-center bg-[#d2e0eb] text-black">
      <button aria-label="Start" className="flex w-[60px] justify-center">
        <svg width="20" height="20"><path d="M0 3l9-1.500V9.500H0zM10 1.300L20 0v9.500H10zM0 10.500h9V18.500L0 17zM10 10.500h10V20l-10-1.500z" fill="#000" /></svg>
      </button>
      <label className="flex h-[49px] w-[360px] items-center border border-[#c4c4c4] bg-white pl-[14px]">
        <Svg w={20} stroke="#222"><circle cx="12.500" cy="7.500" r="6" /><path d="M8 12l-7 7.500" /></Svg>
        <input aria-label="Type here to search" placeholder="Type here to search" className="ml-4 w-0 flex-1 text-[17px] outline-none placeholder:text-[#333]" />
        <SearchArt />
      </label>
      <div className="flex h-full">
        <TaskIcon label="Task View"><Svg w={20} stroke="#111"><path d="M0 1v3h13V1M1 7h11v7H1zM0 20v-3h13v3M18 1v5M18 13v7" /><path d="M16.500 7h3v4h-3z" fill="#111" stroke="none" /></Svg></TaskIcon>
        <TaskIcon label="File Explorer"><Svg w={28} h={24} stroke="none"><path d="M0 1h12l2 3v3H0z" fill="#e2a100" /><path d="M0 4h28v20H0z" fill="#fcc94b" /><path d="M5 24V13h18v11h-5v-6h-8v6z" fill="#3a96dd" /></Svg></TaskIcon>
        <TaskIcon label="Snipping Tool"><Svg w={30}><ellipse cx="15" cy="9" rx="12" ry="7" transform="rotate(-20 15 9)" fill="#f7eeee" stroke="#e04a4a" /><path d="M2 15c-2 5 8 6 14 2" stroke="#e88" /><path d="M13 2l4 17M6 10l15 7" stroke="#888" strokeWidth="2" /><ellipse cx="18" cy="23" rx="3" ry="5" stroke="#1c86d1" strokeWidth="2" /><ellipse cx="25" cy="18" rx="4" ry="3" stroke="#1c86d1" strokeWidth="2" /></Svg></TaskIcon>
        <TaskIcon label="Opera" open><Svg w={30} stroke="none"><ellipse cx="15" cy="15" rx="14.500" ry="14.500" fill="#e0142b" /><path d="M15 .5a14.500 14.500 0 010 29c6-2 9-8 9-14.500S21 2 15 .5z" fill="#b80a1c" /><ellipse cx="15" cy="15" rx="6.500" ry="10.500" fill="#d2e0eb" /></Svg></TaskIcon>
        <TaskIcon label="Chrome" open>
          <Svg w={32} stroke="none">
            <path d="M15 15L2.500 8A14.500 14.500 0 0128 8z" fill="#db4437" />
            <path d="M15 15L2.500 7.500A14.500 14.500 0 0014 30z" fill="#0f9d58" />
            <path d="M15 8.500h13.500A14.500 14.500 0 0114 30z" fill="#ffcd40" />
            <circle cx="15" cy="15" r="7" fill="#fff" /><circle cx="15" cy="15" r="5.500" fill="#4285f4" />
            <circle cx="22.500" cy="22.500" r="9" fill="#bcbcbc" stroke="#999" /><path d="M14 22h17" stroke="#999" />
          </Svg>
        </TaskIcon>
        <TaskIcon label="Notepad" open><Svg w={28} h={26} stroke="none"><path d="M11 2h15l1 21-5 2z" fill="#d9c9a8" /><path d="M9 2h15l-5 22L1 20z" fill="#6fb9cf" /><path d="M9 2h15l-1 5H7z" fill="#a8d8e4" /><path d="M10 1v3M14 1v3M18 1v3M22 1v3" stroke="#555" /></Svg></TaskIcon>
        <TaskIcon label="Excel" open><ExcelLogo size={30} /></TaskIcon>
      </div>
      <div className="ml-auto flex h-full items-center">
        <svg width="26" height="26"><defs><linearGradient id="sun" x1="0" y1="0" x2="1" y2="1"><stop offset="0" stopColor="#f5b731" /><stop offset="1" stopColor="#f7630c" /></linearGradient></defs><circle cx="13" cy="13" r="12.500" fill="url(#sun)" /></svg>
        <span className="ml-[13px] w-[93px] text-[17px] whitespace-pre">77°F  Sunny</span>
        <button aria-label="Hidden icons" className="ml-[29px] flex w-[20px] justify-center"><Chev w={17} sw={1} className="rotate-180" /></button>
        <span className="ml-[11px] flex items-center gap-[10px]">
          <Svg w={18} h={20} stroke="#111"><rect x="2" y="5" width="9" height="10" rx="2" /><path d="M11 8l4-2v8l-4-2M3 2.500C5 .5 9 .5 11 2.500M3 17.500c2 2 6 2 8 0" /></Svg>
          <Svg w={20} h={16} stroke="#333"><path d="M5 14a4 4 0 01-1-7.500A6 6 0 0115 5a5 5 0 011 9.500z" fill="#777" /><path d="M4 14.500c-2-3 2-6 5-5 4-3 9 0 9 5z" fill="#ddd" /></Svg>
          <Svg w={20} h={18} stroke="#111"><path d="M5 2h14v10H5M12 12v4M7 16.500h10M1 1h4v4H1zM3 5v7h4" /></Svg>
          <Svg w={20} h={18} stroke="#111"><path d="M1 6h3l4-4v14l-4-4H1zM11 6c1 2 1 4 0 6" /><path d="M14 4c2 3 2 7 0 10M17 2c3 4 3 10 0 14" stroke="#8796a3" /></Svg>
        </span>
        <div className="ml-4 flex w-[64px] flex-col items-center text-[14px] leading-[23px]">
          <span className="whitespace-nowrap">9:28 AM</span>
          <span className="whitespace-nowrap">9/5/2023</span>
        </div>
        <button aria-label="2 notifications" className="relative mr-[14px] ml-[25px] h-[32px] w-[32px]">
          <svg width="20" height="20" className="mb-3"><path d="M0 0h20v15H8l-4 5v-5H0z" fill="#000" /><path d="M4 4.500h12M4 8h12M4 11.500h12" stroke="#d2e0eb" strokeWidth="1.300" /></svg>
          <span className="absolute right-0 bottom-0 flex size-[21px] items-center justify-center rounded-full border border-[#777] bg-[#d6d6d6] text-[14px] leading-none font-semibold">2</span>
        </button>
        <div className="mr-[3px] h-full w-px bg-[#9fb0bd]" />
      </div>
    </footer>
  );
}

export default function App() {
  return (
    <div className="flex h-screen flex-col overflow-hidden bg-[#efefef] font-['Open_Sans','Noto_Sans',sans-serif]">
      <TitleBar />
      <MenuBar />
      <Ribbon />
      <FormulaBar />
      <Worksheet />
      <SheetTabs />
      <StatusBar />
      <Taskbar />
    </div>
  );
}
